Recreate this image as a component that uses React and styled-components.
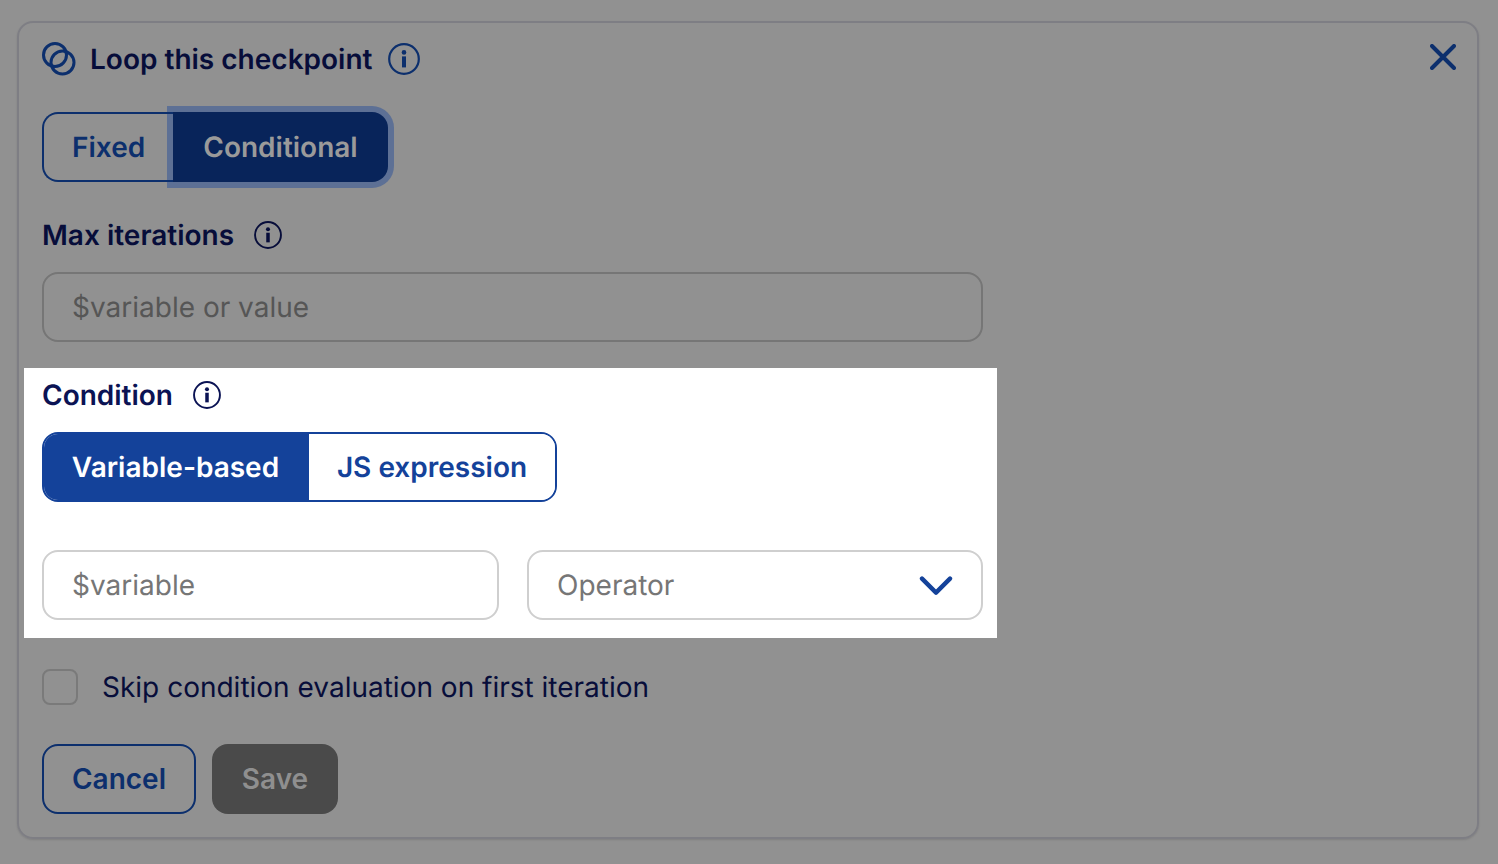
import React from "react";
import styled, { createGlobalStyle } from "styled-components";

const GlobalStyle = createGlobalStyle`
  html, body {
    margin: 0;
    background: #919191;
    font-family: Inter, "Liberation Sans", sans-serif;
    text-rendering: geometricPrecision;
  }
  * { box-sizing: border-box; }
  input { text-rendering: geometricPrecision; }
`;

const InfoIcon = ({ size = 32, color }) => (
  <svg width={size} height={size} viewBox="0 0 32 32" fill="none">
    <circle cx="16" cy="16" r="14.8" stroke={color} strokeWidth="2.2" />
    <circle cx="16" cy="9.4" r="2.3" fill={color} />
    <rect x="14" y="13.4" width="4" height="11" fill={color} />
  </svg>
);

const App = () => {
  return (
    <Page>
      <GlobalStyle />
      <Card>
        <Header>
          <svg width="34" height="34" viewBox="0 0 34 34" fill="none" stroke="#0c2f6d" strokeWidth="3">
            <circle cx="13" cy="13" r="11.5" />
            <circle cx="20.5" cy="20.5" r="11.5" />
          </svg>
          <Title>Loop this checkpoint</Title>
          <InfoIcon color="#0c2f6d" />
          <CloseButton>
            <svg width="26" height="26" viewBox="0 0 26 26" fill="none" stroke="#0c2f6d" strokeWidth="4" strokeLinecap="round">
              <path d="M2 2 L24 24 M24 2 L2 24" />
            </svg>
          </CloseButton>
        </Header>

        <Toggle>
          <DimSegment>Fixed</DimSegment>
          <FocusedSegment>Conditional</FocusedSegment>
        </Toggle>

        <Label $top="36px" $color="#070d3a">
          Max iterations
          <InfoIcon size={28} color="#070d3a" />
        </Label>
        <DimInput placeholder="$variable or value" readOnly />

        <Spotlight>
          <Label $color="#0b1354">
            Condition
            <InfoIcon size={28} color="#0b1354" />
          </Label>
          <BrightToggle>
            <BrightSegment $active>Variable-based</BrightSegment>
            <BrightSegment>JS expression</BrightSegment>
          </BrightToggle>
          <FieldRow>
            <BrightInput placeholder="$variable" readOnly />
            <SelectBox>
              Operator
              <svg width="34" height="20" viewBox="0 0 34 20" fill="none" stroke="#14429a" strokeWidth="4.4" strokeLinecap="round" strokeLinejoin="round">
                <path d="M3 3.6 L17 17.6 L31 3.6" />
              </svg>
            </SelectBox>
          </FieldRow>
        </Spotlight>

        <CheckRow>
          <Checkbox />
          Skip condition evaluation on first iteration
        </CheckRow>

        <Actions>
          <CancelButton>Cancel</CancelButton>
          <SaveButton>Save</SaveButton>
        </Actions>
      </Card>
    </Page>
  );
};

export default App;

const Page = styled.div`
  height: 864px;
  padding: 21px 19px 25px 17px;
  overflow: hidden;
`;

const Card = styled.div`
  height: 818px;
  padding: 18px 21px 0 23px;
  border: 2px solid #7e7e84;
  border-radius: 16px;
  box-shadow: 0 1px 2px rgba(0, 0, 0, 0.12);
`;

const Header = styled.div`
  display: flex;
  align-items: center;
  height: 36px;
`;

const Title = styled.h2`
  margin: 0 16px 0 14px;
  font-size: 28px;
  font-weight: 600;
  color: #070d3a;
`;

const CloseButton = styled.button`
  display: flex;
  align-self: flex-start;
  margin: 3px 0 0 auto;
  padding: 0;
  border: 0;
  background: none;
`;

const Toggle = styled.div`
  display: flex;
  margin-top: 35px;
  height: 70px;
  width: fit-content;
`;

const DimSegment = styled.div`
  position: relative;
  z-index: 1;
  display: flex;
  align-items: center;
  width: 131px;
  padding-left: 28px;
  border: 2px solid #0c2f6d;
  border-right: 0;
  border-radius: 16px 0 0 16px;
  font-size: 28px;
  font-weight: 600;
  color: #0c2f6d;
`;

const FocusedSegment = styled.div`
  display: flex;
  align-items: center;
  justify-content: center;
  width: 215px;
  border-radius: 0 16px 16px 0;
  background: #08245a;
  box-shadow: 0 0 0 6px #5d7095;
  font-size: 28px;
  font-weight: 600;
  color: #9a9a9a;
`;

const Label = styled.div`
  display: flex;
  align-items: center;
  gap: 20px;
  margin-top: ${(p) => p.$top || 0};
  height: 34px;
  font-size: 28px;
  font-weight: 600;
  color: ${(p) => p.$color};
`;

const DimInput = styled.input`
  display: block;
  width: 941px;
  height: 70px;
  margin-top: 20px;
  padding: 0 28px;
  border: 2px solid #767676;
  border-radius: 16px;
  background: none;
  font: 400 28px Inter, sans-serif;
  outline: none;
  &::placeholder {
    color: #565656;
    opacity: 1;
  }
`;

const Spotlight = styled.section`
  width: 973px;
  height: 270px;
  margin: 26px 0 0 -18px;
  padding: 10px 14px 0 18px;
  background: #fff;
`;

const BrightToggle = styled.div`
  display: flex;
  width: 515px;
  height: 70px;
  margin-top: 20px;
  border: 2px solid #14429a;
  border-radius: 16px;
  overflow: hidden;
`;

const BrightSegment = styled.div`
  display: flex;
  align-items: center;
  justify-content: center;
  width: ${(p) => (p.$active ? "265px" : "246px")};
  padding-right: ${(p) => (p.$active ? "2px" : "0")};
  background: ${(p) => (p.$active ? "#14429a" : "#fff")};
  color: ${(p) => (p.$active ? "#fff" : "#14429a")};
  font-size: 28px;
  font-weight: 600;
`;

const FieldRow = styled.div`
  display: grid;
  grid-template-columns: 457px 456px;
  gap: 28px;
  margin-top: 48px;
`;

const BrightInput = styled.input`
  width: 100%;
  height: 70px;
  padding: 0 28px;
  border: 2px solid #cfcfcf;
  border-radius: 16px;
  background: #fff;
  font: 400 28px Inter, sans-serif;
  outline: none;
  &::placeholder {
    color: #767676;
    opacity: 1;
  }
`;

const SelectBox = styled.div`
  display: flex;
  align-items: center;
  justify-content: space-between;
  height: 70px;
  padding: 0 28px;
  border: 2px solid #cfcfcf;
  border-radius: 16px;
  font-size: 28px;
  color: #767676;
`;

const CheckRow = styled.label`
  display: flex;
  align-items: center;
  gap: 24px;
  margin-top: 31px;
  height: 36px;
  font-size: 28px;
  color: #070d3a;
`;

const Checkbox = styled.span`
  width: 36px;
  height: 36px;
  border: 2px solid #7a7a7a;
  border-radius: 8px;
`;

const Actions = styled.div`
  display: flex;
  gap: 16px;
  margin-top: 39px;
`;

const CancelButton = styled.button`
  width: 154px;
  height: 70px;
  border: 2px solid #0c2f6d;
  border-radius: 16px;
  background: none;
  font: 600 28px Inter, sans-serif;
  color: #0c2f6d;
`;

const SaveButton = styled.button`
  width: 126px;
  height: 70px;
  border: 0;
  border-radius: 16px;
  background: #4a4a4a;
  font: 600 28px Inter, sans-serif;
  color: #8f8f8f;
`;
